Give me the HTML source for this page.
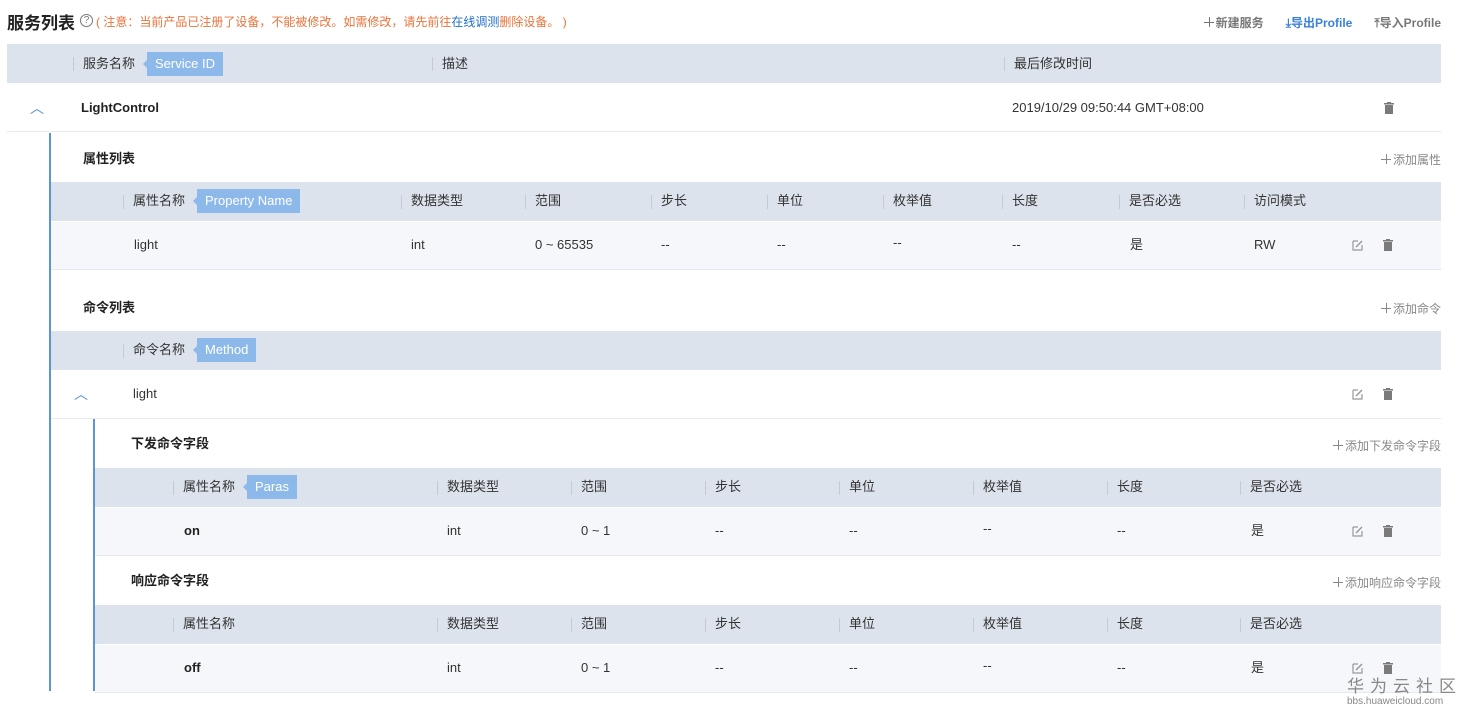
<!DOCTYPE html>
<html><head><meta charset="utf-8"><style>
*{margin:0;padding:0;box-sizing:border-box}
body{width:1469px;height:713px;background:#fff;font-family:"Liberation Sans","Noto Sans CJK SC",sans-serif;font-size:13px;color:#333;position:relative;overflow:hidden}
.a{position:absolute;white-space:nowrap}
.hd{position:absolute;background:#dde3ec;height:39px}
.row{position:absolute;height:48px;border-bottom:1px solid #e6e9ee}
.gr{background:#f5f7fa}
.t{position:absolute;white-space:nowrap;line-height:16px}
.tag{position:absolute;background:#8db9ea;color:#fff;height:24px;line-height:24px;padding:0 8px;font-size:13px}
.tag:before{content:"";position:absolute;left:-4px;top:8px;border:4px solid transparent;border-left:0;border-right-color:#8db9ea}
.sep{position:absolute;width:1px;height:14px;background:#c5cbd3}
.b{font-weight:bold;color:#222}
.add{position:absolute;right:28px;color:#888;font-size:12px;white-space:nowrap}
.pl{display:inline-block;width:11px;height:11px;position:relative;vertical-align:-1px;margin-right:1px}
.pl:before{content:"";position:absolute;left:0;top:5px;width:10px;height:1px;background:currentColor}
.pl:after{content:"";position:absolute;left:5px;top:0;width:1px;height:10px;background:currentColor}
.ic{position:absolute}
</style></head><body>

<div class="a" style="left:7px;top:9px;font-size:17px;font-weight:bold;color:#222">服务列表</div>
<div class="a" style="left:80px;top:14px;width:13px;height:13px;border:1px solid #777;border-radius:50%;font-size:10px;line-height:11px;text-align:center;color:#777">?</div>
<div class="a" style="left:96px;top:13px;font-size:12px;color:#e8743b">( 注意：当前产品已注册了设备，不能被修改。如需修改，请先前往<span style="color:#1e6fcc">在线调测</span>删除设备。 )</div>
<div class="a" style="right:28px;top:14px;font-size:12px;font-weight:bold"><span style="color:#777"><span class="pl"></span>新建服务</span><span style="color:#3a82d6;margin-left:22px">⤓导出Profile</span><span style="color:#777;margin-left:22px">⤒导入Profile</span></div>

<!-- service header -->
<div class="hd" style="left:7px;top:44px;width:1434px"></div>
<div class="sep" style="left:73px;top:57px"></div>
<div class="t" style="left:83px;top:56px">服务名称</div>
<div class="tag" style="left:147px;top:52px">Service ID</div>
<div class="sep" style="left:432px;top:57px"></div>
<div class="t" style="left:442px;top:56px">描述</div>
<div class="sep" style="left:1004px;top:57px"></div>
<div class="t" style="left:1014px;top:56px">最后修改时间</div>

<div class="row" style="left:7px;top:84px;width:1434px"></div>
<div class="t" style="left:30px;top:100px;color:#5a8fd0;font-size:14px">︿</div>
<div class="t b" style="left:81px;top:100px">LightControl</div>
<div class="t" style="left:1012px;top:100px">2019/10/29 09:50:44 GMT+08:00</div>

<div class="a" style="left:49px;top:133px;width:2px;height:558px;background:#5a95d6"></div>
<div class="a" style="left:93px;top:419px;width:2px;height:272px;background:#5a95d6"></div>

<!-- properties -->
<div class="t b" style="left:83px;top:151px">属性列表</div>
<div class="add" style="top:151px"><span class="pl"></span>添加属性</div>
<div class="hd" style="left:51px;top:182px;width:1390px"></div>
<div class="sep" style="left:123px;top:195px"></div>
<div class="t" style="left:133px;top:193px">属性名称</div>
<div class="tag" style="left:197px;top:189px">Property Name</div>
<div class="sep" style="left:401px;top:195px"></div><div class="t" style="left:411px;top:193px">数据类型</div>
<div class="sep" style="left:525px;top:195px"></div><div class="t" style="left:535px;top:193px">范围</div>
<div class="sep" style="left:651px;top:195px"></div><div class="t" style="left:661px;top:193px">步长</div>
<div class="sep" style="left:767px;top:195px"></div><div class="t" style="left:777px;top:193px">单位</div>
<div class="sep" style="left:883px;top:195px"></div><div class="t" style="left:893px;top:193px">枚举值</div>
<div class="sep" style="left:1002px;top:195px"></div><div class="t" style="left:1012px;top:193px">长度</div>
<div class="sep" style="left:1119px;top:195px"></div><div class="t" style="left:1129px;top:193px">是否必选</div>
<div class="sep" style="left:1244px;top:195px"></div><div class="t" style="left:1254px;top:193px">访问模式</div>
<div class="row gr" style="left:51px;top:222px;width:1390px"></div>
<div class="t" style="left:134px;top:237px">light</div>
<div class="t" style="left:411px;top:237px">int</div>
<div class="t" style="left:535px;top:237px">0 ~ 65535</div>
<div class="t" style="left:661px;top:237px">--</div>
<div class="t" style="left:777px;top:237px">--</div>
<div class="t" style="left:893px;top:235px">--</div>
<div class="t" style="left:1012px;top:237px">--</div>
<div class="t" style="left:1130px;top:237px">是</div>
<div class="t" style="left:1254px;top:237px">RW</div>

<!-- commands -->
<div class="t b" style="left:83px;top:300px">命令列表</div>
<div class="add" style="top:300px"><span class="pl"></span>添加命令</div>
<div class="hd" style="left:51px;top:331px;width:1390px"></div>
<div class="sep" style="left:123px;top:344px"></div>
<div class="t" style="left:133px;top:342px">命令名称</div>
<div class="tag" style="left:197px;top:338px">Method</div>
<div class="row" style="left:51px;top:371px;width:1390px"></div>
<div class="t" style="left:74px;top:386px;color:#5a8fd0;font-size:14px">︿</div>
<div class="t" style="left:133px;top:386px">light</div>

<div class="t b" style="left:131px;top:436px">下发命令字段</div>
<div class="add" style="top:437px"><span class="pl"></span>添加下发命令字段</div>
<div class="hd" style="left:95px;top:468px;width:1346px"></div>
<div class="sep" style="left:173px;top:481px"></div>
<div class="t" style="left:183px;top:479px">属性名称</div>
<div class="tag" style="left:247px;top:475px">Paras</div>
<div class="sep" style="left:437px;top:481px"></div><div class="t" style="left:447px;top:479px">数据类型</div>
<div class="sep" style="left:571px;top:481px"></div><div class="t" style="left:581px;top:479px">范围</div>
<div class="sep" style="left:705px;top:481px"></div><div class="t" style="left:715px;top:479px">步长</div>
<div class="sep" style="left:839px;top:481px"></div><div class="t" style="left:849px;top:479px">单位</div>
<div class="sep" style="left:973px;top:481px"></div><div class="t" style="left:983px;top:479px">枚举值</div>
<div class="sep" style="left:1107px;top:481px"></div><div class="t" style="left:1117px;top:479px">长度</div>
<div class="sep" style="left:1240px;top:481px"></div><div class="t" style="left:1250px;top:479px">是否必选</div>
<div class="row gr" style="left:95px;top:508px;width:1346px"></div>
<div class="t b" style="left:184px;top:523px">on</div>
<div class="t" style="left:447px;top:523px">int</div>
<div class="t" style="left:581px;top:523px">0 ~ 1</div>
<div class="t" style="left:715px;top:523px">--</div>
<div class="t" style="left:849px;top:523px">--</div>
<div class="t" style="left:983px;top:521px">--</div>
<div class="t" style="left:1117px;top:523px">--</div>
<div class="t" style="left:1251px;top:523px">是</div>

<div class="t b" style="left:131px;top:573px">响应命令字段</div>
<div class="add" style="top:574px"><span class="pl"></span>添加响应命令字段</div>
<div class="hd" style="left:95px;top:605px;width:1346px"></div>
<div class="sep" style="left:173px;top:618px"></div><div class="t" style="left:183px;top:616px">属性名称</div>
<div class="sep" style="left:437px;top:618px"></div><div class="t" style="left:447px;top:616px">数据类型</div>
<div class="sep" style="left:571px;top:618px"></div><div class="t" style="left:581px;top:616px">范围</div>
<div class="sep" style="left:705px;top:618px"></div><div class="t" style="left:715px;top:616px">步长</div>
<div class="sep" style="left:839px;top:618px"></div><div class="t" style="left:849px;top:616px">单位</div>
<div class="sep" style="left:973px;top:618px"></div><div class="t" style="left:983px;top:616px">枚举值</div>
<div class="sep" style="left:1107px;top:618px"></div><div class="t" style="left:1117px;top:616px">长度</div>
<div class="sep" style="left:1240px;top:618px"></div><div class="t" style="left:1250px;top:616px">是否必选</div>
<div class="row gr" style="left:95px;top:645px;width:1346px"></div>
<div class="t b" style="left:184px;top:660px">off</div>
<div class="t" style="left:447px;top:660px">int</div>
<div class="t" style="left:581px;top:660px">0 ~ 1</div>
<div class="t" style="left:715px;top:660px">--</div>
<div class="t" style="left:849px;top:660px">--</div>
<div class="t" style="left:983px;top:658px">--</div>
<div class="t" style="left:1117px;top:660px">--</div>
<div class="t" style="left:1251px;top:660px">是</div>

<!-- icons -->
<svg class="ic" width="0" height="0"><defs>
<g id="del"><rect x="1" y="1" width="10" height="1.5" fill="#7a7a7a"/><rect x="4" y="0" width="4" height="1.5" fill="#7a7a7a"/><rect x="2" y="3" width="8" height="9" fill="#7a7a7a"/></g>
<g id="ed"><path d="M1 2h5M1 2v9h9V6" fill="none" stroke="#999" stroke-width="1.2"/><path d="M4 8l6-6" stroke="#999" stroke-width="1.5"/></g>
</defs></svg>
<svg class="ic" style="left:1383px;top:102px" width="12" height="12"><use href="#del"/></svg>
<svg class="ic" style="left:1352px;top:239px" width="12" height="12"><use href="#ed"/></svg>
<svg class="ic" style="left:1382px;top:239px" width="12" height="12"><use href="#del"/></svg>
<svg class="ic" style="left:1352px;top:388px" width="12" height="12"><use href="#ed"/></svg>
<svg class="ic" style="left:1382px;top:388px" width="12" height="12"><use href="#del"/></svg>
<svg class="ic" style="left:1352px;top:525px" width="12" height="12"><use href="#ed"/></svg>
<svg class="ic" style="left:1382px;top:525px" width="12" height="12"><use href="#del"/></svg>
<svg class="ic" style="left:1352px;top:662px" width="12" height="12"><use href="#ed"/></svg>
<svg class="ic" style="left:1382px;top:662px" width="12" height="12"><use href="#del"/></svg>

<!-- watermark -->
<div class="a" style="left:1347px;top:672px;font-size:17px;color:#888;letter-spacing:6px;font-family:'Noto Sans CJK SC',sans-serif">华为云社区</div>
<div class="a" style="left:1347px;top:696px;font-size:10px;color:#888">bbs.huaweicloud.com</div>
</body></html>
